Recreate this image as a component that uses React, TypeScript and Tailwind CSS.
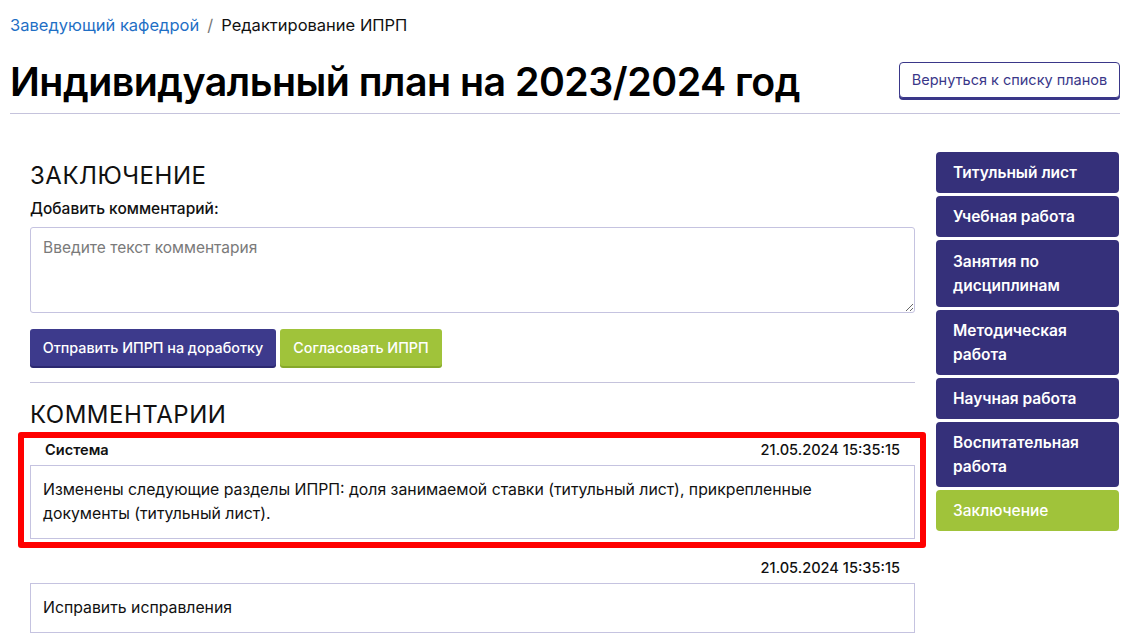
import React from "react";

const font = { fontFamily: "Inter, 'Noto Sans', sans-serif" };

const nav = [
  { t: "Титульный лист", h: "h-[41px]" },
  { t: "Учебная работа", h: "h-[41px]" },
  { t: "Занятия по дисциплинам", h: "h-[67px]" },
  { t: "Методическая работа", h: "h-[65px]" },
  { t: "Научная работа", h: "h-[41px]" },
  { t: "Воспитательная работа", h: "h-[65px]" },
];

export default function App() {
  return (
    <div className="w-[1123px] h-[640px] overflow-hidden bg-white text-[#111]" style={font}>
      <div className="pl-[10px] pr-[3px]">
        <div className="pt-[15px] text-[16.5px] leading-[20px] flex items-center">
          <span className="text-[#1f6fc5]">Заведующий кафедрой</span>
          <span className="mx-[8px] text-[#777]">/</span>
          <span className="text-[#111]">Редактирование ИПРП</span>
        </div>
        <div className="flex items-start justify-between mt-[23px] pb-[7px] border-b border-[#c5c3dc]">
          <h1 className="text-[39.3px] leading-[48px] font-semibold tracking-[-0.5px] text-black">
            Индивидуальный план на 2023/2024 год
          </h1>
          <button className="mt-[4px] w-[221px] h-[36px] rounded-[4px] border border-[#3a3789] shadow-[0_2px_0_#3a3789] text-[#3a3789] text-[14.5px] bg-white">
            Вернуться к списку планов
          </button>
        </div>
      </div>
      <div className="flex pl-[30px] pr-[4px] pt-[38px]">
        <div className="w-[885px] relative">
          <div className="text-[24px] leading-[30px] tracking-[0.5px] mt-[9px]">ЗАКЛЮЧЕНИЕ</div>
          <div className="text-[15.5px] font-medium mt-[8px] leading-[20px]">Добавить комментарий:</div>
          <textarea
            className="mt-[8px] block w-full h-[86px] border border-[#c5c3e0] rounded-[3px] px-[12px] py-[8px] text-[15.5px] placeholder-[#7a7a7a] outline-none"
            placeholder="Введите текст комментария"
            style={font}
          />
          <div className="flex gap-[4px] mt-[16px]">
            <button className="h-[37px] w-[246px] rounded-[3px] bg-[#3d3a8c] shadow-[0_2px_0_#2b2870] text-white text-[14.3px] font-medium">
              Отправить ИПРП на доработку
            </button>
            <button className="h-[37px] w-[162px] rounded-[3px] bg-[#a0c33a] shadow-[0_2px_0_#86a82a] text-white text-[14.3px] font-medium">
              Согласовать ИПРП
            </button>
          </div>
          <div className="mt-[16px] border-t border-[#c5c3dc]" />
          <div className="text-[24px] leading-[30px] tracking-[0.5px] mt-[17px]">КОММЕНТАРИИ</div>
          <div className="mt-[6px]">
            <div className="flex justify-between px-[15px] text-[14.6px] leading-[20px] pt-[4px]">
              <span className="font-semibold">Система</span>
              <span className="font-medium">21.05.2024 15:35:15</span>
            </div>
            <div className="mt-[5px] border border-[#c5c3e0] px-[12px] py-[12px] text-[15.8px] leading-[24px]">
              Изменены следующие разделы ИПРП: доля занимаемой ставки (титульный лист), прикрепленные документы (титульный лист).
            </div>
          </div>
          <div className="mt-[19px]">
            <div className="flex justify-end px-[15px] text-[14.6px] leading-[20px]">
              <span className="font-medium">21.05.2024 15:35:15</span>
            </div>
            <div className="mt-[5px] border border-[#c5c3e0] px-[12px] py-[12px] text-[15.8px] leading-[24px]">
              Исправить исправления
            </div>
          </div>
          <div className="absolute left-[-12px] top-[280px] w-[908px] h-[116px] border-[6px] border-[#ff0000] rounded-[3px] pointer-events-none" />
        </div>
        <div className="ml-[21px] w-[183px] flex flex-col gap-[3px]">
          {nav.map((n) => (
            <div
              key={n.t}
              className={`${n.h} rounded-[4px] bg-[#35307a] text-white text-[15.5px] font-semibold leading-[24px] pl-[17px] pr-[10px] flex items-center`}
            >
              <span>{n.t}</span>
            </div>
          ))}
          <div className="h-[41px] rounded-[4px] bg-[#a0c33a] text-white text-[15.5px] font-medium px-[17px] flex items-center">
            Заключение
          </div>
        </div>
      </div>
    </div>
  );
}
